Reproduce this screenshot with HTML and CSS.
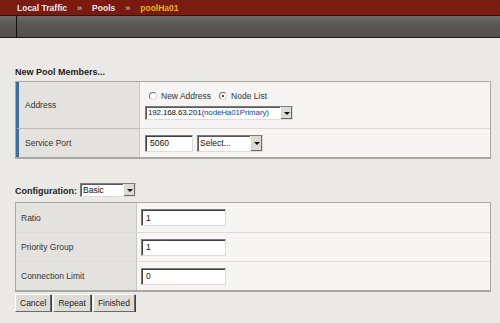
FILE: index.html
```html
<!DOCTYPE html>
<html lang="en">
<head>
  <meta charset="UTF-8" />
  <title>Pool Members</title>
  <link rel="stylesheet" href="styles.css">
</head>
<body>

  <div class="topbar">
    <span class="crumb">Local Traffic</span>
    <span class="sep">&raquo;</span>
    <span class="crumb">Pools</span>
    <span class="sep">&raquo;</span>
    <span class="crumb current">poolHa01</span>
  </div>

  <div class="toolbar">
    <div class="toolbar-tab"></div>
  </div>

  <div class="content">
    <h2 class="section-title">New Pool Members...</h2>

    <div class="form-table members">
      <div class="row tall">
        <div class="label">Address</div>
        <div class="value">
          <div class="radios">
            <label class="radio"><span class="dot"></span>New Address</label>
            <label class="radio"><span class="dot checked"></span>Node List</label>
          </div>
          <div class="select wide">
            <span class="select-text">192.168.63.201<span class="node">(nodeHa01Primary)</span></span>
            <span class="arrow"></span>
          </div>
        </div>
      </div>
      <div class="row">
        <div class="label">Service Port</div>
        <div class="value inline">
          <div class="input port">5060</div>
          <div class="select service">
            <span class="select-text">Select...</span>
            <span class="arrow"></span>
          </div>
        </div>
      </div>
    </div>

    <div class="config-line">
      <span class="config-label">Configuration:</span>
      <div class="select basic">
        <span class="select-text">Basic</span>
        <span class="arrow"></span>
      </div>
    </div>

    <div class="form-table settings">
      <div class="row">
        <div class="label">Ratio</div>
        <div class="value"><div class="input field">1</div></div>
      </div>
      <div class="row">
        <div class="label">Priority Group</div>
        <div class="value"><div class="input field">1</div></div>
      </div>
      <div class="row">
        <div class="label">Connection Limit</div>
        <div class="value"><div class="input field">0</div></div>
      </div>
    </div>

    <div class="actions">
      <button class="btn">Cancel</button>
      <button class="btn">Repeat</button>
      <button class="btn">Finished</button>
    </div>
  </div>

</body>
</html>
```

FILE: styles.css
```css
* {
  margin: 0;
  padding: 0;
  box-sizing: border-box;
}

body {
  background: #eae9e5;
  font-family: "Liberation Sans", Arial, sans-serif;
  font-size: 8.5px;
  color: #222;
}

/* breadcrumb bar */
.topbar {
  height: 16px;
  background: #7a1b11;
  border-bottom: 1px solid #3b0d07;
  padding-left: 17px;
  display: flex;
  align-items: center;
  gap: 10px;
  font-size: 8.5px;
  font-weight: bold;
  color: #f0ebe8;
}

.topbar .sep {
  font-size: 9px;
  font-weight: normal;
  color: #e8dedb;
}

.topbar .current {
  color: #e9b400;
}

.toolbar {
  height: 22px;
  background: linear-gradient(to bottom, #6d6c68, #585753 40%, #52514d);
  border-bottom: 1px solid #1b1a18;
}

.toolbar-tab {
  width: 17px;
  height: 100%;
  border-right: 1px solid #111;
}

.content {
  padding: 0 9px 0 15px;
}

.section-title {
  margin-top: 29px;
  margin-bottom: 3px;
  font-size: 9px;
  font-weight: bold;
  color: #222;
  line-height: 11px;
}

/* form tables */
.form-table {
  background: #f6f5f3;
  border: 1px solid #a8a8a3;
  border-bottom: 2px solid #a8a8a3;
}

.row {
  display: grid;
  height: 29px;
  border-top: 1px solid #dcdbd7;
}

.row:first-child {
  border-top: none;
}

.row.tall {
  height: 46px;
}

.members .row {
  grid-template-columns: 124px 1fr;
}

.settings .row {
  grid-template-columns: 121px 1fr;
}

.label {
  background: #e3e2de;
  border-right: 1px solid #c9c8c4;
  display: flex;
  align-items: center;
  padding-left: 5px;
  color: #333;
}

.members .label {
  border-left: 3px solid #3a6da6;
  padding-left: 6px;
}

.members .row + .row .label {
  border-top: 1px solid #bdbcb8;
  margin-top: -1px;
}

.value {
  display: flex;
  flex-direction: column;
  justify-content: center;
  align-items: flex-start;
  padding-left: 4px;
}

.members .value {
  padding-left: 5px;
}

.value.inline {
  flex-direction: row;
  justify-content: flex-start;
  align-items: center;
  gap: 4px;
}

/* radios */
.radios {
  display: flex;
  gap: 8px;
  margin: 0 0 5px 4px;
  color: #333;
}

.radio {
  display: flex;
  align-items: center;
  gap: 4px;
}

.dot {
  width: 8px;
  height: 8px;
  border-radius: 50%;
  background: #fff;
  border: 1px solid #6e6e6e;
  border-right-color: #d8d8d8;
  border-bottom-color: #d8d8d8;
  position: relative;
}

.dot.checked::after {
  content: "";
  position: absolute;
  left: 2px;
  top: 2px;
  width: 2px;
  height: 2px;
  border-radius: 50%;
  background: #111;
}

/* fake inputs and selects */
.input, .select {
  background: #fff;
  border: 1px solid #7b7b7b;
  border-right-color: #dcdcdc;
  border-bottom-color: #dcdcdc;
  box-shadow: inset 1px 1px 0 #404040;
  color: #111;
  display: flex;
  align-items: center;
}

.input {
  height: 17px;
  padding-left: 4px;
}

.port {
  width: 48px;
}

.field {
  width: 85px;
}

.select {
  height: 14px;
  padding-left: 2px;
  justify-content: space-between;
  box-shadow: inset 1px 1px 0 #5a5a5a;
}

.select-text {
  white-space: nowrap;
  overflow: hidden;
}

.node {
  color: #1a3fa0;
}

.wide {
  width: 148px;
  font-size: 8px;
  letter-spacing: -0.15px;
}

.service {
  width: 66px;
  height: 17px;
}

.basic {
  width: 56px;
}

.arrow {
  flex: none;
  width: 12px;
  height: 100%;
  background: #dcdad5;
  border-left: 1px solid #fff;
  box-shadow: inset -1px -1px 0 #6a6a6a;
  position: relative;
}

.arrow::after {
  content: "";
  position: absolute;
  left: 3px;
  top: 50%;
  margin-top: -1px;
  border-left: 3px solid transparent;
  border-right: 3px solid transparent;
  border-top: 3px solid #111;
}

/* configuration line */
.config-line {
  display: flex;
  align-items: flex-end;
  gap: 3px;
  margin-top: 24px;
  margin-bottom: 5px;
  height: 14px;
}

.config-label {
  font-size: 9px;
  font-weight: bold;
  line-height: 11px;
}

/* buttons */
.actions {
  display: flex;
  gap: 2px;
  margin-top: 2px;
}

.btn {
  font-family: "Liberation Sans", Arial, sans-serif;
  font-size: 8.5px;
  color: #222;
  height: 18px;
  padding: 0 4px;
  background: #dedcd7;
  border: 1px solid #fff;
  border-right-color: #6a6a6a;
  border-bottom-color: #6a6a6a;
  box-shadow: 1px 1px 0 #404040;
}
```
